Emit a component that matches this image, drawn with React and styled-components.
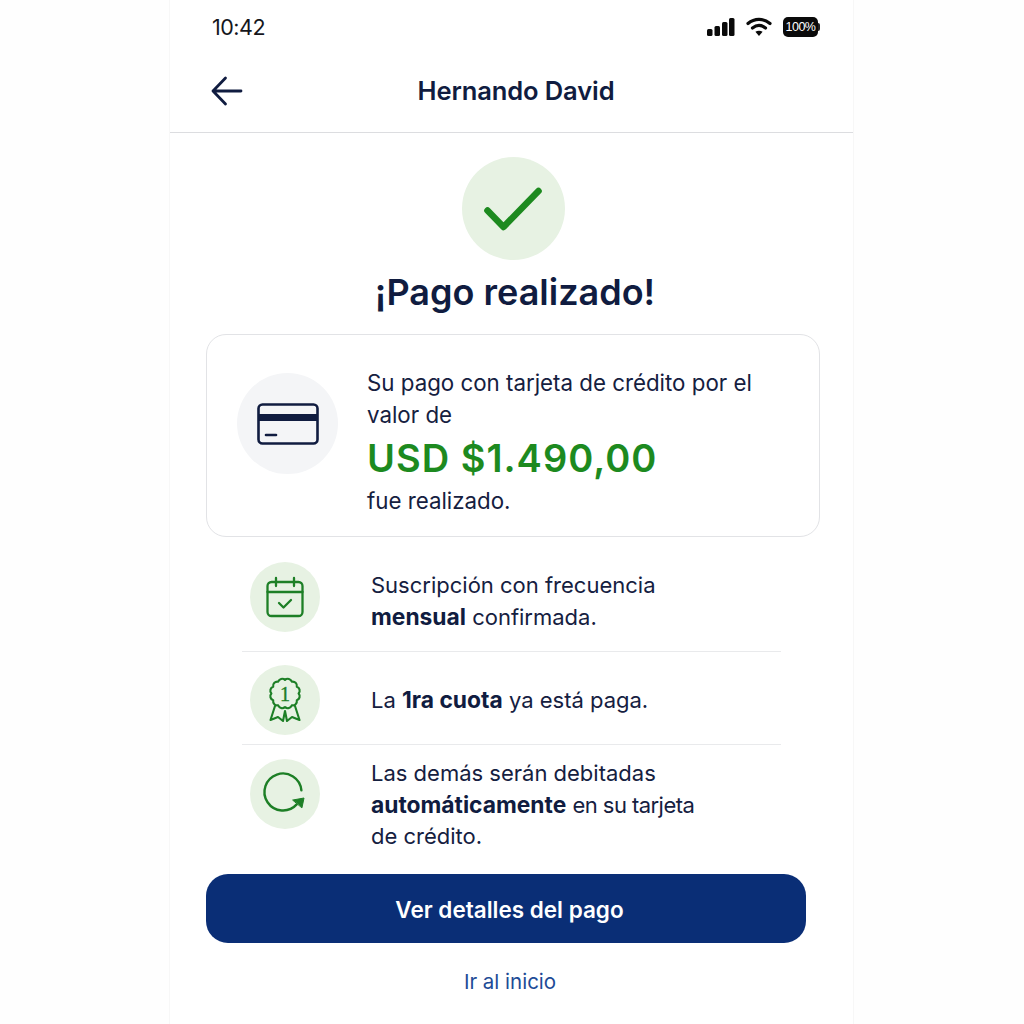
import React from "react";
import styled, { createGlobalStyle } from "styled-components";

const Global = createGlobalStyle`
  html, body { margin: 0; padding: 0; background: #fefefe; }
  body { font-family: Inter, "Noto Sans", "Liberation Sans", sans-serif; color: #101c40; }
`;
const Phone = styled.main`
  width: 683px; height: 1024px; margin-left: 170px; background: #fff; overflow: hidden;
  box-shadow: -1px 0 0 #f7f7f7, 1px 0 0 #f7f7f7;
  display: flex; flex-direction: column;
`;
const StatusBar = styled.div`
  height: 54px; padding: 0 35px 0 42px; box-sizing: border-box; display: flex; align-items: center; justify-content: space-between;
`;
const Time = styled.span`font-size: 21.5px; color: #15161c; letter-spacing: -0.5px;`;
const StatusIcons = styled.div`display: flex; align-items: center; gap: 11px;`;
const Battery = styled.span`
  position: relative; width: 35px; height: 20px; border-radius: 5px; background: #0a0a0a; color: #fff;
  font: 12.5px/20px "Liberation Sans", sans-serif; text-align: center; letter-spacing: -0.5px;
  &::after { content: ""; position: absolute; right: -2px; top: 6px; width: 2px; height: 8px; background: #222; border-radius: 0 2px 2px 0; }
`;
const NavBar = styled.header`
  height: 78px; box-sizing: content-box; padding: 0 0 0 41px; display: flex; align-items: center; position: relative;
  border-bottom: 1px solid #dcdde0;
`;
const BackIcon = styled.svg`margin-top: -4px;`;
const NavTitle = styled.h1`
  position: absolute; left: 0; right: 0; top: 19px; margin: 0 0 0 9px; text-align: center;
  font-size: 25.5px; line-height: 36px; font-weight: 600; color: #101c40; letter-spacing: -0.1px;
`;
const Content = styled.div`display: flex; flex-direction: column; align-items: center; padding-top: 24px;`;
const SuccessBadge = styled.div`
  width: 103px; height: 103px; border-radius: 50%; background: #e7f2e3;
  display: flex; align-items: center; justify-content: center; margin-left: 3px;
`;
const Heading = styled.h2`
  margin: 7px 0 17px 7px; font-size: 36px; line-height: 50px; font-weight: 600; color: #101c40;
`;
const Card = styled.section`
  width: 614px; height: 203px; box-sizing: border-box; align-self: flex-start; margin-left: 36px;
  border: 1px solid #e2e3e6; border-radius: 20px; padding: 0 30px;
  display: flex; align-items: flex-start; gap: 29px;
`;
const CardIcon = styled.div`
  width: 101px; height: 101px; border-radius: 50%; background: #f4f5f7; flex: none; margin-top: 38px;
  display: flex; align-items: center; justify-content: center;
`;
const CardText = styled.div`font-size: 22.3px; line-height: 32px; color: #15203f; padding-top: 32px;`;
const Amount = styled.div`
  font-size: 38px; font-weight: 600; line-height: 53px; color: #1d8a1f; letter-spacing: 1px; margin: 1px 0 0;
`;
const List = styled.div`
  align-self: flex-start; margin: 0 0 0 72px; width: 539px; display: flex; flex-direction: column;
`;
const Row = styled.div`
  display: flex; align-items: flex-start; height: ${p => p.$h}px; box-sizing: border-box;
  border-bottom: ${p => (p.$last ? "none" : "1px solid #e9eaec")};
`;
const RowIcon = styled.div`
  width: 70px; height: 70px; border-radius: 50%; background: #e7f2e3; margin: ${p => p.$top}px 0 0 8px; flex: none;
  display: flex; align-items: center; justify-content: center;
  svg { overflow: visible; }
`;
const RowText = styled.p`
  margin: ${p => p.$top}px 0 0 51px; font-size: 22px; line-height: 31px; color: #15203f;
  b { font-weight: 700; font-size: 22.8px; color: #101c40; }
`;
const Tight = styled.span`letter-spacing: -0.55px;`;
const Actions = styled.div`
  align-self: flex-start; margin-left: 36px; width: 600px; display: flex; flex-direction: column; align-items: center;
`;
const Primary = styled.button`
  width: 600px; height: 69px; border: 0; border-radius: 22px; background: #0a2e76; color: #fff;
  font: 600 22.5px Inter, "Noto Sans", sans-serif; margin-top: 23px; padding: 2px 0 0 7px;
`;
const LinkButton = styled.a`
  margin: 24px 0 0 8px; font-size: 20.5px; line-height: 30px; color: #1d4b96;
`;

const scallop = (() => {
  const n = 12, cx = 19, cy = 15.5, r = 13.6;
  const pts = Array.from({ length: n }, (_, i) => {
    const a = (i / n) * 2 * Math.PI - Math.PI / 2;
    return [cx + r * Math.cos(a), cy + r * Math.sin(a)];
  });
  let d = `M${pts[0][0].toFixed(2)} ${pts[0][1].toFixed(2)}`;
  for (let i = 1; i <= n; i++) {
    const p = pts[i % n];
    d += `A4.2 4.2 0 0 1 ${p[0].toFixed(2)} ${p[1].toFixed(2)}`;
  }
  return d + "Z";
})();

export default function App() {
  return (
    <>
      <Global />
      <Phone>
        <StatusBar>
          <Time>10:42</Time>
          <StatusIcons>
            <svg width="28" height="18" viewBox="0 0 28 18" fill="#0a0a0a">
              <rect x="0" y="11" width="5.500" height="7" rx="1.500" /><rect x="7.500" y="8" width="5.500" height="10" rx="1.500" />
              <rect x="15" y="4" width="5.500" height="14" rx="1.500" /><rect x="22" y="0" width="5.500" height="18" rx="1.500" />
            </svg>
            <svg width="26" height="20" viewBox="0 0 26 20" fill="none" stroke="#0a0a0a" strokeWidth="3.200" strokeLinecap="round">
              <path d="M2 6.500C8.500 1 17.500 1 24 6.500" /><path d="M6.500 11c4-3.200 9-3.200 13 0" />
              <path d="M13 19l-3.600-4.200c2.200-1.400 5-1.400 7.200 0z" fill="#0a0a0a" stroke="none" />
            </svg>
            <Battery>100%</Battery>
          </StatusIcons>
        </StatusBar>
        <NavBar>
          <BackIcon width="32" height="30" viewBox="0 0 32 30" fill="none" stroke="#101c40" strokeWidth="2.800" strokeLinecap="round" strokeLinejoin="round">
            <path d="M30 15H2M14.500 2L2 15l12.500 13" />
          </BackIcon>
          <NavTitle>Hernando David</NavTitle>
        </NavBar>
        <Content>
          <SuccessBadge>
            <svg width="60" height="46" viewBox="0 0 60 46" fill="none" stroke="#1d8a1f" strokeWidth="6.600" strokeLinecap="round" strokeLinejoin="round">
              <path d="M4.500 24.500L20.500 41L55.500 5" />
            </svg>
          </SuccessBadge>
          <Heading>¡Pago realizado!</Heading>
          <Card>
            <CardIcon>
              <svg width="62" height="42" viewBox="0 0 62 42" fill="none" stroke="#101c40" strokeWidth="2.600" strokeLinecap="round">
                <rect x="1.500" y="1.500" width="59" height="39" rx="4" />
                <rect x="1.500" y="11" width="59" height="7" fill="#101c40" stroke="none" />
                <path d="M9 32h10" />
              </svg>
            </CardIcon>
            <CardText>
              Su pago con tarjeta de crédito por el<br />valor de
              <Amount>USD $1.490,00</Amount>
              fue realizado.
            </CardText>
          </Card>
          <List>
            <Row $h={115}>
              <RowIcon $top={25}>
                <svg width="38" height="40" viewBox="0 0 38 40" fill="none" stroke="#1d7f26" strokeWidth="2.300" strokeLinecap="round" strokeLinejoin="round">
                  <rect x="1.500" y="5" width="35" height="34" rx="4" />
                  <path d="M1.500 15h35M10 1v8M28 1v8M13 26l4.500 4.500L25 23" />
                </svg>
              </RowIcon>
              <RowText $top={33}>Suscripción con frecuencia<br /><b>mensual</b> confirmada.</RowText>
            </Row>
            <Row $h={93}>
              <RowIcon $top={13}>
                <svg width="38" height="44" viewBox="0 0 38 44" fill="none" stroke="#1d7f26" strokeWidth="2.100" strokeLinecap="round" strokeLinejoin="round">
                  <path d={scallop} />
                  <path d="M9 28L4.500 42 12 39 17 43 19 33 21 43 26 39 33.500 42 29 28" />
                  <text x="19" y="22.500" textAnchor="middle" fontSize="20" fontFamily="Liberation Serif, serif" fill="#1d7f26" stroke="#1d7f26" strokeWidth="0.4">1</text>
                </svg>
              </RowIcon>
              <RowText $top={32}>La <b>1ra cuota</b> ya está paga.</RowText>
            </Row>
            <Row $h={106} $last>
              <RowIcon $top={14}>
                <svg width="42" height="42" viewBox="0 0 42 42" fill="none" stroke="#1d7f26" strokeWidth="2.400" strokeLinecap="round">
                  <path d="M37.400 17.400A18.500 18.500 0 1 0 32.700 31.400" />
                  <path d="M29 27L40 25L38 34.500z" fill="#1d7f26" stroke="#1d7f26" strokeWidth="1" strokeLinejoin="round" />
                </svg>
              </RowIcon>
              <RowText $top={13}>Las demás serán debitadas<br /><b>automáticamente</b> <Tight>en su tarjeta</Tight><br />de crédito.</RowText>
            </Row>
          </List>
          <Actions>
            <Primary>Ver detalles del pago</Primary>
            <LinkButton>Ir al inicio</LinkButton>
          </Actions>
        </Content>
      </Phone>
    </>
  );
}
